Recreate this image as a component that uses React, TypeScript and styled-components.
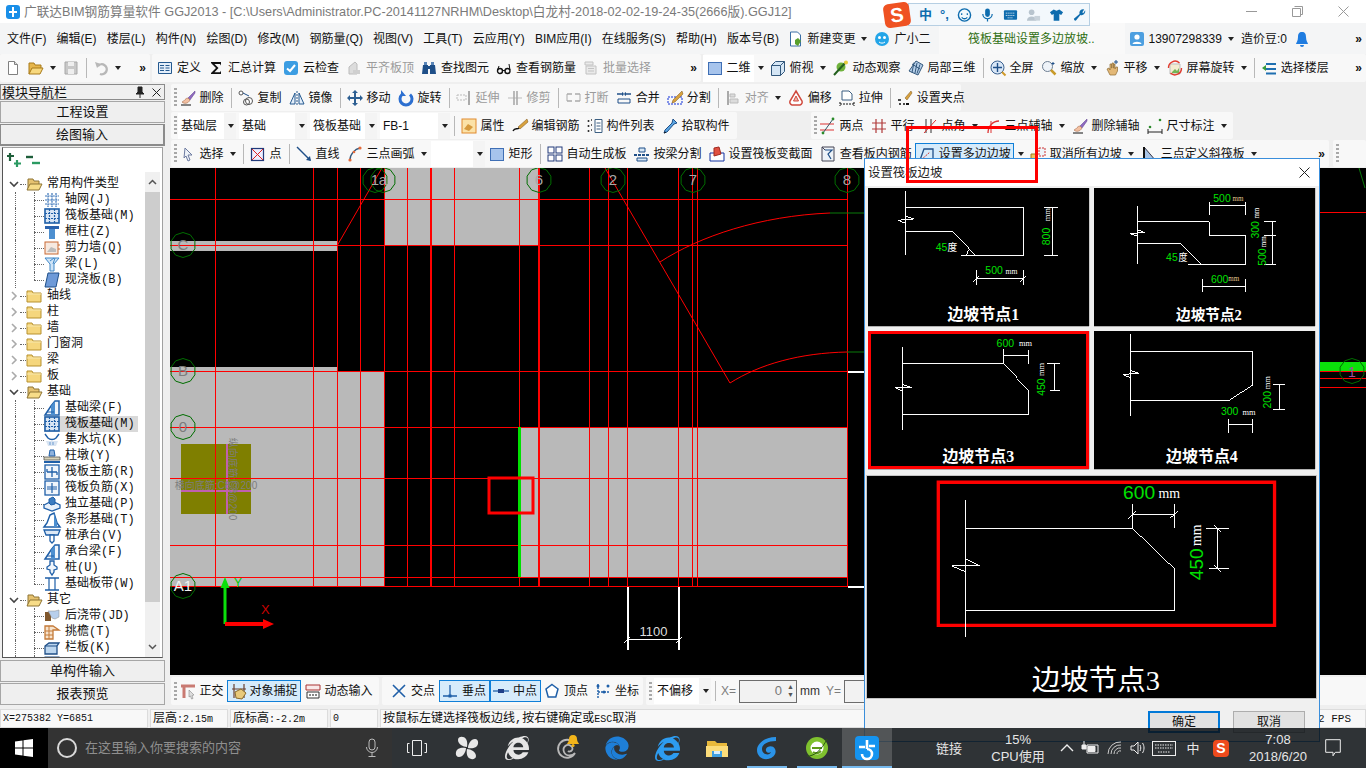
import React from 'react';
import styled, { createGlobalStyle } from 'styled-components';
import { FaEdge, FaInternetExplorer } from 'react-icons/fa';

const UI = `"Liberation Sans","Noto Sans CJK SC",sans-serif`;
const MONO = `"Liberation Mono","Noto Sans CJK SC",monospace`;
const SERIF = `"Liberation Serif","Noto Sans CJK SC",serif`;

const Global = createGlobalStyle`
  html, body { margin: 0; padding: 0; background: #000; }
  * { box-sizing: border-box; }
`;

/* ---------- page frame ---------- */
const Screen = styled.div`
  position: relative; width: 1366px; height: 768px; overflow: hidden; display: flex; flex-direction: column;
  background: #efefef; font: 12px/16px ${UI}; color: #111;
`;
const TitleBar = styled.div`
  height: 23px; background: #fff; display: flex; align-items: center; padding-left: 5px; color: #7a7a7a; font-size: 12.7px; white-space: nowrap;
`;
const TitleText = styled.span` margin-left: 3px; `;
const WinButtons = styled.div` margin-left: auto; display: flex; height: 100%; `;
const WinButton = styled.div` width: 46px; display: flex; align-items: center; justify-content: center; `;
const MenuBar = styled.div`
  height: 31px; background: #f4f5f6; display: flex; align-items: center; padding-left: 2px; white-space: nowrap;
`;
const MenuItem = styled.span` padding: 0 5.1px; `;
const MenuNotice = styled.div`
  width: 186px; height: 100%; margin-left: 5px; background: #f9f9f9; color: #2f6f12; display: flex; align-items: center; padding-left: 29px;
`;
const TopRow = styled.div` height: 28px; display: flex; gap: 2px; margin-bottom: 1px; `;
const Seg = styled.div<{ $w?: number; $ml?: number; $pl?: number }>`
  height: 100%; display: flex; align-items: center; white-space: nowrap; background: #f8f8f8; border-radius: 2px;
  padding-left: ${p => p.$pl ?? 1.5}px; margin-left: ${p => p.$ml ?? 0}px; ${p => (p.$w ? `width:${p.$w}px;flex:none;` : '')}
`;
const Workspace = styled.div` height: 624px; display: flex; `;
const LeftPane = styled.div` width: 170px; flex: none; padding: 1px 5px 2px 0; display: flex; flex-direction: column; `;
const RightPane = styled.div` flex: 1; min-width: 0; display: flex; flex-direction: column; padding-top: 1px; `;
const ToolRow = styled.div` height: 27px; flex: none; display: flex; padding-left: 1px; margin-bottom: 1px; `;
const Canvas = styled.div` height: 507px; flex: none; background: #000; `;
const CanvasSvg = styled.svg` display: block; width: 1196px; height: 507px; font-family: ${UI}; `;
const BottomRow = styled.div` height: 28px; margin-top: 2px; display: flex; gap: 3px; padding-left: 1px; `;

/* ---------- toolbar parts ---------- */
const Tool = styled.span<{ $off?: boolean; $on?: boolean; $white?: boolean; $tight?: boolean }>`
  display: inline-flex; align-items: center; gap: ${p => (p.$tight ? 3 : 4)}px; padding: 0 3.5px; height: 22px;
  color: ${p => (p.$off ? '#9b9b9b' : '#111')};
  ${p => p.$on && 'background:#d6ebfb; box-shadow: inset 0 0 0 1px #0f7fd8;'}
  ${p => p.$white && 'background:#fff; height:27px;'}
`;
const Glyph = styled.svg` width: 16px; height: 16px; flex: none; display: block; overflow: visible; `;
const Caret = styled.i`
  flex: none; width: 0; height: 0; margin-left: 2px; border: 3px solid transparent; border-top: 4px solid #222; border-bottom: 0;
`;
const OuterCaret = styled.span` flex: none; width: 11px; height: 22px; display: flex; align-items: center; justify-content: center; margin-right: 1px; `;
const Divider = styled.i` flex: none; width: 1px; height: 20px; background: #b8b8b8; margin: 0 2px 0 4px; `;
const Grip = styled.i`
  flex: none; width: 3px; height: 19px; margin: 0 -1px 0 3px;
  background: repeating-linear-gradient(#a8a8a8 0 2px, transparent 2px 4px);
`;
const Overflow = styled.span` margin-left: auto; margin-right: 5px; font: bold 12px/14px ${UI}; letter-spacing: -1px; color: #111; `;
const Combo = styled.span<{ $w: number; $ml?: number }>`
  flex: none; width: ${p => p.$w}px; height: 26px; margin-left: ${p => p.$ml ?? 0}px; background: #fff; display: flex; align-items: center; padding-left: 3px;
`;
const ComboArrow = styled.span`
  margin-left: auto; width: 12px; height: 100%; background: #f4f4f4; display: flex; align-items: center; justify-content: center;
`;
const FieldLabel = styled.span<{ $gray?: boolean }>` color: ${p => (p.$gray ? '#7d7d7d' : '#333')}; margin: 0 3px; flex: none; `;
const Field = styled.span`
  flex: none; width: 58px; height: 23px; border: 1px solid #6d6d6d; background: #f2f2f2; display: flex; align-items: center; justify-content: flex-end;
  padding-right: 14px; position: relative; color: #777; font-size: 13px;
`;
const Spin = styled.span` position: absolute; right: 2px; top: 2px; font-size: 7px; line-height: 8px; color: #555; display: flex; flex-direction: column; `;

/* ---------- left pane ---------- */
const PaneHead = styled.div`
  height: 16px; flex: none; border: 1px solid #8b8b8b; background: #efefef; display: flex; align-items: center; font-size: 13px; line-height: 13px; padding-left: 1px;
`;
const PaneHeadIcons = styled.span` margin-left: auto; display: flex; gap: 7px; padding-right: 3px; align-items: center; font-size: 11px; `;
const PaneButton = styled.div<{ $pressed?: boolean }>`
  height: 22px; flex: none; margin-top: 1px; display: flex; align-items: center; justify-content: center; background: #efefef; font-size: 13px;
  border: 1px solid ${p => (p.$pressed ? '#8b8b8b' : '#a6a6a6')};
  ${p => p.$pressed && 'border-width: 1px 2px 2px 1px;'}
`;
const TreeBox = styled.div`
  flex: 1; min-height: 0; margin: 1px 2px 1px 2px; display: flex; flex-direction: column; background: #fff; border: 1px solid #a0a0a0; border-left-color: #555; border-bottom-color: #555;
`;
const Expanders = styled.div` height: 24px; flex: none; display: flex; align-items: center; gap: 3px; padding: 0 0 0 3px; `;
const TreeBody = styled.div` flex: 1; min-height: 0; display: flex; position: relative; `;
const TreeList = styled.div` flex: 1; min-width: 0; overflow: hidden; padding-top: 4px; margin-left: -3px; `;
const Scrollbar = styled.div` width: 15px; flex: none; margin-right: 2px; background: #f0f0f0; display: flex; flex-direction: column; align-items: center; `;
const ScrollBtn = styled.span` height: 20px; flex: none; display: flex; align-items: center; justify-content: center; `;
const ScrollThumb = styled.span` width: 15px; height: 410px; flex: none; background: #cdcdcd; `;
const ScrollRest = styled.span` flex: 1; `;
const TreeRow = styled.div<{ $leaf?: boolean; $trunk?: boolean; $last?: boolean }>`
  position: relative; height: 16px; display: flex; align-items: center; white-space: nowrap; font: 12px/16px ${MONO};
  padding-left: ${p => (p.$leaf ? 34 : 8)}px;
  ${p => p.$leaf && `&::before { content:''; position:absolute; left:34px; top:0; height:${p.$last ? 8 : 16}px; border-left:1px dotted #666; }`}
  ${p => p.$trunk && `&::after { content:''; position:absolute; left:15px; top:0; height:16px; border-left:1px dotted #666; }`}
`;
const Chevron = styled.svg` width: 12px; height: 12px; flex: none; `;
const Dots = styled.i<{ $w: number }>` flex: none; width: ${p => p.$w}px; border-top: 1px dotted #666; `;
const NodeBody = styled.span<{ $sel?: boolean }>`
  display: inline-flex; align-items: center; gap: 5px; height: 16px; padding-right: 3px; ${p => p.$sel && 'background:#d9d9d9;'}
`;

/* ---------- status ---------- */
const StatusBar = styled.div` height: 21px; flex: none; display: flex; gap: 2px; padding-top: 2px; padding-left: 0; background: #efefef; font: 10px/18px ${MONO}; `;
const StatusCell = styled.div<{ $w?: number; $grow?: boolean }>`
  flex: ${p => (p.$grow ? 1 : 'none')}; width: ${p => p.$w ?? 0}px; height: 19px; background: #f8f8f8; border: 1px solid #dcdcdc; padding-left: 2px; white-space: nowrap; overflow: hidden;
`;
const Cjk = styled.span` font-size: 12px; `;
const Fps = styled.span` float: right; margin-right: 14px; font-size: 11px; `;

/* ---------- task bar ---------- */
const Taskbar = styled.div`
  position: relative; z-index: 3; height: 40px; flex: none; display: flex; align-items: stretch; background: rgba(9,14,18,.84); color: #eee;
`;
const StartCell = styled.div` width: 48px; display: flex; align-items: center; justify-content: center; background: #000; `;
const SearchBox = styled.div`
  width: 344px; background: #333; display: flex; align-items: center; padding: 0 13px 0 9px; gap: 8px; color: #8f8f8f; font-size: 13px;
`;
const SearchRing = styled.i` width: 20px; height: 20px; border-radius: 50%; border: 2.5px solid #d9d9d9; flex: none; `;
const SearchMic = styled.span` margin-left: auto; display: flex; `;
const TaskCell = styled.div<{ $run?: boolean; $active?: boolean }>`
  width: 50px; flex: none; display: flex; align-items: center; justify-content: center; position: relative;
  ${p => p.$active && 'background: rgba(255,255,255,.17);'}
  ${p => p.$run && `&::after { content:''; position:absolute; left:${p.$active ? 0 : 5}px; right:${p.$active ? 0 : 5}px; bottom:0; height:2px; background:#76b9ed; }`}
`;
const TaskGlyph = styled.svg` width: 26px; height: 26px; display: block; overflow: visible; `;
const Tray = styled.div` margin-left: auto; display: flex; align-items: stretch; padding-right: 20px; font-size: 12px; `;
const TrayCell = styled.div<{ $w: number; $ml?: number }>`
  width: ${p => p.$w}px; margin-left: ${p => p.$ml ?? 0}px; flex: none; display: flex; flex-direction: column; align-items: center; justify-content: center; text-align: center; white-space: nowrap; color: #e6e6e6; line-height: 17px; font-size: 13px;
`;
const TrayGlyph = styled.svg` width: 18px; height: 18px; display: block; `;
const SogouMark = styled.span`
  width: 16px; height: 17px; border-radius: 4px; background: #ee4a1c; color: #fff; font: bold 14px/17px ${UI}; text-align: center;
`;

/* ---------- dialog ---------- */
const Dialog = styled.div`
  position: absolute; z-index: 2; left: 864px; top: 158px; width: 456px; height: 584px; background: #f0f0f0; border: 1px solid #3a8edb; display: flex; flex-direction: column;
`;
const DialogTitle = styled.div`
  height: 27px; flex: none; background: #fff; display: flex; align-items: center; padding-left: 3px; font-size: 12.4px; color: #222;
`;
const DialogClose = styled.span` margin-left: auto; margin-right: 9px; display: flex; `;
const ThumbGrid = styled.div` display: grid; grid-template-columns: 221px 221px; grid-auto-rows: 138px; gap: 5px; padding: 2px 0 0 3px; `;
const Thumb = styled.div<{ $sel?: boolean }>`
  background: #000; box-shadow: 0 1px 0 #b0b0b0, 1px 0 0 #c8c8c8; ${p => p.$sel && 'outline: 3px solid #f00; outline-offset: -3px;'}
`;
const Drawing = styled.svg` display: block; width: 100%; height: 100%; font-family: ${UI}; `;
const Preview = styled.div` width: 451px; height: 224px; flex: none; margin: 6px 0 0 1px; background: #000; border: 1px solid #c4c4c4; `;
const DialogFoot = styled.div` flex: 1; display: flex; justify-content: flex-end; gap: 13px; padding: 12px 14px 0 0; `;
const DlgButton = styled.div<{ $primary?: boolean }>`
  width: 72px; height: 22px; display: flex; align-items: center; justify-content: center; background: #e1e1e1; font-size: 12px;
  border: ${p => (p.$primary ? '2px solid #0078d7' : '1px solid #adadad')};
`;

/* ---------- overlays ---------- */
const CalloutBox = styled.div` position: absolute; z-index: 2; left: 906px; top: 126px; width: 132px; height: 57px; border: 3px solid #f00; `;
const Ime = styled.div`
  position: absolute; z-index: 4; left: 884px; top: 3px; height: 23px; display: flex; align-items: center;
`;
const ImeLogo = styled.span`
  width: 26px; height: 24px; background: #ef5222; border-radius: 5px; transform: rotate(-8deg); color: #fff; font: bold 20px/24px ${UI}; text-align: center; z-index: 1; flex: none;
`;
const ImeBar = styled.div`
  height: 23px; width: 182px; margin-left: -2px; background: #f3f8fc; border: 1px solid #b6cfe3; display: flex; align-items: center; gap: 8px; padding-left: 10px; color: #0e6cae; font-size: 13px; font-weight: bold;
`;
const ImeGlyph = styled.svg` width: 15px; height: 16px; flex: none; `;

/* ---------- icons ---------- */
const S = (p: React.SVGProps<SVGPathElement>) => <path fill="none" {...p} />;
const B = '#1f5fa8';
const icons: Record<string, React.ReactNode> = {
  new: <><path d="M3.5 1.5h6l3 3v10h-9z" fill="#fff" stroke="#808080" /><path d="M9.5 1.5v3h3" fill="#ddd" stroke="#808080" /></>,
  open: <><path d="M1 14V3h5l1 2h6v3" fill="#e6b64c" stroke="#a87a1a" /><path d="M1 14l3-6h11l-3 6z" fill="#f7d87e" stroke="#a87a1a" /></>,
  save: <><path d="M2 2h12v12H2z" fill="#c8c8c8" stroke="#a8a8a8" /><path d="M5 2h6v4H5zM5 9h6v5H5z" fill="#eee" /></>,
  undo: <><S d="M5 6a5 5 0 1 1 2 8" stroke="#b8b8b8" strokeWidth="2.4" /><path d="M2 2l6 2-4 4z" fill="#b8b8b8" /></>,
  define: <><path d="M1.5 2.5h13v11h-13z" fill="#e3eefa" stroke="#24598f" /><S d="M3 5.5h4M3 8h4M3 10.5h4M8.5 5.5h4M8.5 8h4M8.5 10.5h4" stroke="#24598f" /></>,
  sigma: <path d="M3 2h10v3.5L12 4H6.5l4 4-4 4.2H12l1-1.5V14H3v-1l5-5-5-5z" fill="#111" />,
  cloud: <><rect x="1" y="1" width="14" height="14" rx="3" fill="#3c9de2" /><S d="M4 8.5l3 2.5 5-6" stroke="#fff" strokeWidth="2" /></>,
  level: <><path d="M3 14V7l6-5 2 2v10z" fill="#dcdcdc" stroke="#bcbcbc" /><path d="M7 14v-4h7v4z" fill="#cfcfcf" /></>,
  find: <><path d="M2 5h5v9H1zM9 5h5l1 9H9z" fill="#1f4f88" /><path d="M3 2h3v3H3zM10 2h3v3h-3z" fill="#5b86b8" /><path d="M7 6h2v3H7z" fill="#1f4f88" /></>,
  glass: <><circle cx="4" cy="11" r="2.5" fill="none" stroke="#111" strokeWidth="1.4" /><circle cx="11.5" cy="11" r="2.5" fill="none" stroke="#111" strokeWidth="1.4" /><S d="M1.5 10L3 6M14 10l-1-6M6.5 10.5h2.5" stroke="#111" /></>,
  batch: <><path d="M2 2h8v3H2zM3 6h10v8H3z" fill="#eaeaea" stroke="#c2c2c2" /><S d="M5 8.5h6M5 11h6" stroke="#c2c2c2" /></>,
  square: <rect x="1.5" y="2.5" width="13" height="12" fill="#a7c4ec" stroke="#3f6fb5" />,
  top: <><path d="M1.5 5.5l4-4h9v10l-4 4h-9z" fill="#d5e6f5" stroke="#33587c" /><path d="M1.5 5.5h9v10M10.5 5.5l4-4" fill="none" stroke="#33587c" /></>,
  orbit: <><circle cx="8" cy="7" r="4.5" fill="#6fb23c" /><path d="M1 15L13 2" stroke="#24601e" strokeWidth="2" /><circle cx="13" cy="2.5" r="2" fill="#e6cd3e" /></>,
  local3d: <><path d="M8 1l7 4-5 10-9-4z" fill="#b6cfe9" stroke="#33587c" /><S d="M4 4l8 5M6 2.5l-2 10M9 3l-2 10M12 4.5l-3 9" stroke="#33587c" /></>,
  full: <><circle cx="7.5" cy="7.5" r="6.5" fill="#d8e6f6" stroke="#39608f" /><S d="M7.5 3v9M3 7.5h9" stroke="#1f4f88" strokeWidth="1.4" /><path d="M12 12l3.5 3.5" stroke="#d09a2a" strokeWidth="2" /></>,
  zoom: <><circle cx="6.5" cy="6.5" r="5" fill="#eef3f9" stroke="#6d7e92" /><path d="M10 10l4.5 4.5" stroke="#c99b2a" strokeWidth="2.5" /><path d="M12 2v3M10.5 3.5h3" stroke="#1f4f88" /></>,
  pan: <><path d="M3 9l2-1 1 2V4h1.5v4h.5V3h1.5v5h.5V4H11v5l1-2h1.5v4l-2 4H6z" fill="#e3b877" stroke="#8c6a32" strokeWidth=".7" /><path d="M12 0v4M10 2h4" stroke="#1f4f88" /></>,
  rotate: <><path d="M3 4h10v10H3z" fill="#f4ecd0" stroke="#bdbdbd" /><path d="M5 12l3-3 2 2 2-3v5H5z" fill="#74b456" /><S d="M1.5 8a6.5 6.5 0 0 1 11-5M14.5 8a6.5 6.5 0 0 1-11 5" stroke="#e23b2e" strokeWidth="1.4" /></>,
  floor: <><path d="M5 3h10v2H5zM5 8h10v2H5zM5 12.5h10v2H5z" fill="#1f6fb0" /><path d="M1 8l4-3v6z" fill="#3a9c3a" /></>,
  brush: <><path d="M15 1L8 8l2 2 5-7z" fill="#8f6ac0" stroke="#5a3d8a" strokeWidth=".5" /><path d="M8 8c-3 0-3 3-6 4 2 2 6 2 8-2z" fill="#f3c1a3" stroke="#a86b4a" strokeWidth=".6" /><path d="M1 15h10" stroke="#111" /></>,
  copy: <><circle cx="11" cy="11" r="3.5" fill="#fff" stroke="#555" /><circle cx="8.5" cy="12" r="3" fill="none" stroke="#555" /><circle cx="3" cy="3" r="2" fill="#fff" stroke="#555" /><path d="M5 3l6 3" stroke="#1f4f88" /></>,
  mirror: <><path d="M1 14L6 3v11z" fill="#e3eefa" stroke="#24598f" /><path d="M15 14L10 3v11z" fill="#e3eefa" stroke="#24598f" /><path d="M8 1v14" stroke="#24598f" strokeDasharray="2 1" /></>,
  move: <path d="M8 0l3 3H9v4h4V5l3 3-3 3V9H9v4h2l-3 3-3-3h2V9H3v2L0 8l3-3v2h4V3H5z" fill="#2d5f92" />,
  rot: <><S d="M4 4.5a6 6 0 1 0 8 0" stroke="#2c6fd0" strokeWidth="3" /><path d="M3 0v6h5z" fill="#2c6fd0" /></>,
  extend: <><path d="M1 5h9v5H1z" fill="none" stroke="#bbb" strokeDasharray="2 1" /><path d="M13 1v14" stroke="#aaa" strokeWidth="2" /></>,
  trim: <><path d="M1 8h14" stroke="#bbb" strokeWidth="1" /><path d="M7 1v14M10 1v14" stroke="#aaa" strokeWidth="1.6" /></>,
  breakL: <><S d="M2 4h5M10 4h5M2 11h5M10 11h5" stroke="#aaa" strokeWidth="1.5" /><path d="M2 4v7M15 4v7" stroke="#aaa" /></>,
  merge: <><path d="M1 4h5M10 4h5" stroke="#1f4f88" strokeWidth="1.4" /><path d="M6 2l3 2-3 2zM10 2L7 4l3 2z" fill="#1f4f88" /><path d="M2 9h12v4H2z" fill="none" stroke="#1f4f88" /></>,
  split: <><path d="M1 14h14V7H1z" fill="none" stroke="#1030d8" strokeDasharray="2 1" /><path d="M15 1L6 10l-1 3 3-1 8-8z" fill="#d8a23e" stroke="#7a521a" strokeWidth=".5" /></>,
  align: <><path d="M3 1v14" stroke="#aaa" strokeWidth="2" /><path d="M5 4h5v3H5zM5 9h8v4H5z" fill="#dcdcdc" stroke="#bbb" /></>,
  offset: <><path d="M8 1l6 10a3 3 0 0 1-2 4H4a3 3 0 0 1-2-4z" fill="#fff" stroke="#d04a3e" strokeWidth="1.5" /><path d="M8 6l2.5 5h-5z" fill="#f3b3aa" stroke="#d04a3e" /></>,
  stretch: <><path d="M3 1h7l3 3v6H3z" fill="#fff" stroke="#3c5f82" /><path d="M1 14h14M1 12v4M15 12v4" stroke="#111" strokeDasharray="2 1" /></>,
  grip: <><path d="M14 1L8 8l2 2 5-7z" fill="#d8a23e" stroke="#7a521a" strokeWidth=".5" /><path d="M2 14h2M6 14h2M1 10h3" stroke="#111" strokeWidth="1.6" /><path d="M9 13h3v2H9z" fill="#111" /></>,
  props: <><rect x="1" y="1" width="14" height="14" fill="#fbe2a8" stroke="#e08a2e" /><path d="M3 11l4-5 5 3-4 4z" fill="#d69a3e" /></>,
  edit: <><path d="M15 1L6 9l2 2 8-7z" fill="#d8a23e" stroke="#7a521a" strokeWidth=".5" /><path d="M1 13c2-4 4-1 6-3" fill="none" stroke="#111" strokeWidth="1.4" /></>,
  list: <><path d="M1.5 2v2M1.5 7v2M1.5 12v2M4 2h1M4 7h1M4 12h1" stroke="#333" strokeWidth="1.6" /><path d="M8 1.5h7v13H8z" fill="#fff" stroke="#3c5f82" /><path d="M9.5 5h4M9.5 8h4M9.5 11h4" stroke="#3c5f82" /></>,
  pick: <><path d="M11 1l4 4-3 1-7 8-3 1 1-3 7-7z" fill="#5ba6e2" stroke="#1f4f88" /><path d="M2 15l2-1" stroke="#111" /></>,
  twoPt: <><path d="M0 6h14M0 12h14" stroke="#d33" /><path d="M3 15L13 1" stroke="#356" /><circle cx="3" cy="15" r="1.4" fill="#2a8a2a" /><circle cx="13" cy="1" r="1.4" fill="#2a8a2a" /></>,
  parallel: <path d="M1 5h14M1 11h14M5 1v14M11 1v14" stroke="#b03a3a" strokeWidth="1.2" />,
  angle: <><path d="M1 10h14" stroke="#d33" /><path d="M4 1v14M9 1v14" stroke="#333" /><path d="M2 15L14 2" stroke="#d33" /></>,
  arcAxis: <><path d="M1 9h15M6 3v12" stroke="#d33" /><S d="M3 15c0-7 5-12 11-12" stroke="#d33" strokeWidth="1.4" /></>,
  dim: <><path d="M1 14h14M1 11v5M15 11v5" stroke="#222" /><circle cx="3" cy="9" r="1.3" fill="#2a8a2a" /><circle cx="13" cy="2" r="1.3" fill="#2a8a2a" /></>,
  arrow: <path d="M5 2l7 7H8l2 5-2 1-2-5-2 2z" fill="#eef2f8" stroke="#6c7aa0" />,
  point: <><rect x="1.5" y="2.5" width="12" height="12" fill="#eef" stroke="#223a7a" strokeWidth="1.2" /><path d="M2 3l11 11M13 3L2 14" stroke="#d22" /></>,
  line: <><path d="M1 1l13 13" stroke="#1f4f88" strokeWidth="1.4" /><path d="M15 15l-5-1 4-4z" fill="#1f4f88" /></>,
  arc: <><S d="M3 14C3 8 8 3 13 2" stroke="#33587c" strokeWidth="1.4" /><circle cx="3" cy="14" r="1.6" fill="#e36a3a" /><circle cx="7" cy="6" r="1.3" fill="#e36a3a" /><circle cx="13" cy="2" r="1.6" fill="#e36a3a" /></>,
  auto: <><rect x="1" y="1" width="6" height="6" fill="#fff" stroke="#223a7a" /><rect x="9" y="1" width="6" height="6" fill="#fff" stroke="#223a7a" /><rect x="1" y="9" width="6" height="6" fill="#fff" stroke="#223a7a" /><rect x="9" y="9" width="6" height="6" fill="#fff" stroke="#223a7a" /></>,
  beamSplit: <><path d="M5 2h6v4H5z" fill="#d5e6f5" stroke="#1f4f88" /><path d="M0 9h16" stroke="#1f4f88" strokeWidth="2" strokeDasharray="3 1" /><path d="M3 12h10v3H3z" fill="#d5e6f5" stroke="#1f4f88" /></>,
  varSec: <><path d="M1 7h14v8H1z" fill="#fff" stroke="#1030a0" /><path d="M5 2l5-1 2 7-7 2z" fill="#e05040" stroke="#a02a20" /></>,
  view: <><path d="M2 1h12v14H2z" fill="#eef3f8" stroke="#445" /><path d="M5 4h7l-4 4 3 5" fill="none" stroke="#1f4f88" strokeWidth="1.2" /><path d="M2 1l3 3" stroke="#445" /></>,
  slope: <><path d="M1 14L5 3h9v11z" fill="none" stroke="#1f4f88" strokeWidth="1.3" /><path d="M2 14l9-8" stroke="#c33" strokeDasharray="2 1" /></>,
  cancel: <><path d="M1 8h6v6H1z" fill="#f0c75c" stroke="#9a7a20" /><path d="M9 2h6v8H9z" fill="#eef3f8" stroke="#c33" strokeDasharray="2 1" /></>,
  tri: <><path d="M3 1v14h12z" fill="#a8c4e6" stroke="#334" /><path d="M3 1v14" stroke="#111" strokeWidth="2" /></>,
  ortho: <><path d="M1 3h14M4 3v12" stroke="#c97a72" strokeWidth="3" /><path d="M9 7l5 5-2 .5 1 3-1.5.5-1-3L9 14z" fill="#ddd" stroke="#777" strokeWidth=".5" /></>,
  snap: <><path d="M3 1v14M13 1v14M1 6h14" stroke="#6a4030" strokeWidth="1.2" /><path d="M4 9l6-3 5 4-4 6-6-1z" fill="#e8c97a" stroke="#8a6a2a" /></>,
  dyn: <><path d="M1 2h14v5H1z" fill="#f8e8e8" stroke="#a33" /><path d="M2 9h12v6H2z" fill="#fff" stroke="#333" /><path d="M5 11v2M8 11v2M11 11v2" stroke="#111" /></>,
  cross: <path d="M2 2l12 12M14 2L2 14" stroke="#1f5fa8" strokeWidth="1.6" />,
  perp: <><path d="M1 13h14M8 2v11" stroke="#1f5fa8" strokeWidth="1.3" /><rect x="6.5" y="11.5" width="3" height="3" fill="#1f5fa8" /></>,
  mid: <><path d="M0 8h16" stroke="#1f5fa8" strokeWidth="1.3" /><rect x="5" y="6" width="6" height="4" fill="#1f3f88" /></>,
  vertex: <path d="M8 1.5l6 4.5-2.2 8H4.2L2 6z" fill="#fff" stroke="#1f5fa8" strokeWidth="1.5" />,
  coord: <><path d="M3 1v14M3 9h12" stroke="#1f5fa8" strokeWidth="1.4" strokeDasharray="2 1" /><circle cx="3" cy="3" r="1.5" fill="#1f5fa8" /><circle cx="13" cy="3" r="1.5" fill="#1f5fa8" /><circle cx="9" cy="9" r="1.5" fill="#1f5fa8" /></>,
  changeDoc: <><path d="M3.5 1h7l3 3v11h-10z" fill="#fff" stroke="#3a6ea5" /><path d="M8 9l3-2 3 3-3 5-3-2z" fill="#5aa02c" /></>,
  mascot: <><circle cx="8" cy="8" r="7" fill="#23a5e8" /><circle cx="5.5" cy="6.5" r="1.5" fill="#fff" /><circle cx="10.5" cy="6.5" r="1.5" fill="#fff" /><path d="M5 11c2 1.5 4 1.5 6 0" stroke="#fff" fill="none" /></>,
  user: <><rect x="1" y="1" width="14" height="14" rx="2" fill="#4d9fe0" /><circle cx="8" cy="6" r="2.6" fill="#fff" /><path d="M3.5 13c.5-3 8.500-3 9 0z" fill="#fff" /></>,
  bell: <><path d="M8 1c3 0 4 2 4 5 0 4 2 6 2 7H2c0-1 2-3 2-7 0-3 1-5 4-5z" fill="#1f7ce0" /><path d="M6 14h4a2 2 0 0 1-4 0z" fill="#1f7ce0" /></>,
  appFrame: <><rect x="1" y="1" width="14" height="14" rx="3" fill="#1a8fe8" /><path d="M8 3v10M4 8h8" stroke="#fff" strokeWidth="2" /></>,
  plusplus: <><path d="M4 1v8M1 4h7" stroke="#1e5e3a" strokeWidth="2.2" /><path d="M11 8v7M8 11.500h7" stroke="#2b9a62" strokeWidth="2.2" /></>,
  minusminus: <><path d="M1 5h7" stroke="#1e5e3a" strokeWidth="2.4" /><path d="M7 11h8" stroke="#2b9a62" strokeWidth="2.4" /></>,
  folderClosed: <><path d="M1 14V3h5l1 2h8v9z" fill="#f5d67d" stroke="#b7912f" /><path d="M1 6h14" stroke="#f8e8b0" /></>,
  folderOpen: <><path d="M2 14V3h5l1 2h5v3" fill="#e6c270" stroke="#8e7435" /><path d="M1 14l3-6h12l-3 6z" fill="#f7dc88" stroke="#8e7435" /></>,
  tGrid: <path d="M4 1v14M8 1v14M12 1v14M1 4h14M1 8h14M1 12h14" stroke="#3b74b8" strokeWidth="1.2" strokeDasharray="2 .6" />,
  tRaft: <><rect x="1" y="1" width="14" height="14" fill="#d9e6f5" stroke={B} strokeWidth="1.6" /><path d="M1 5.500h14M1 10.500h14M5.500 1v14M10.500 1v14" stroke={B} strokeWidth="1.2" strokeDasharray="2 1" /></>,
  tColumn: <><path d="M1 2h14v3H1z" fill="#2a62ad" /><path d="M5 5h6v10H5z" fill="#4d8fd0" /></>,
  tWall: <><rect x="1" y="2" width="13" height="12" fill="#f6e9e0" stroke="#c96a35" /><path d="M3 12h9v-3L7 7z" fill="#bcbcbc" /><path d="M14 5h2M14 9h2" stroke="#c96a35" /></>,
  tBeam: <><path d="M1 2h14L10 8v7H6V8z" fill="#cfe4f7" stroke="#3f87c7" /><path d="M11 2l-2 6M6 5l4-3" stroke="#3f87c7" /></>,
  tSlab: <path d="M4 1h11l-3 14H1z" fill="#6e9ad8" stroke="#1f4f88" />,
  tBeamF: <><path d="M1 15L7 6l4-5h4v14z" fill="#f0f5fb" stroke={B} strokeWidth="1.5" /><path d="M7 6l4-5v14H7z" fill="#4d8fd0" /><path d="M3 12h7" stroke={B} /></>,
  tPit: <><path d="M1 2l3 4c2 2 6 2 8 0l3-4" fill="none" stroke={B} strokeWidth="1.4" /><path d="M2 9h12l-2 5H4z" fill="#d8e4f2" /><path d="M6 10v3M9 10v3" stroke="#6a9ad0" /></>,
  tCap: <><path d="M6 2h4l1 6H5z" fill="#8fb2dc" stroke={B} /><path d="M0 9h16v3H0z" fill="#d8d2b8" stroke="#555" strokeWidth=".8" /><path d="M0 14h16" stroke={B} strokeWidth="2" /></>,
  tMain: <><rect x="1" y="1" width="14" height="14" fill="#f0f5fb" stroke={B} strokeWidth="1.3" /><path d="M8 3v10M3 8h10M3 5v3M13 8v3" stroke={B} strokeWidth="1.3" /></>,
  tNeg: <><rect x="1" y="1" width="14" height="14" fill="#f0f5fb" stroke={B} strokeWidth="1.3" /><path d="M8 3v10M3 7h10M3 9h10" stroke={B} strokeWidth="1.2" /></>,
  tIso: <><path d="M0 9l8-4 8 4v3l-8 3-8-3z" fill="#e8f0fa" stroke={B} strokeWidth="1.3" /><path d="M5 3l4-2 2 2v5l-4 1-2-2z" fill="#3c7cc0" stroke={B} /></>,
  tStrip: <><path d="M0 15l3-4 3-8 4-2 3 10 3 4z" fill="#fff" stroke={B} strokeWidth="1.5" /><path d="M10 1l3 10v4h-3z" fill="#4d8fd0" /></>,
  tPileCap: <><path d="M0 2h16l-2 5H2z" fill="#dce8f5" stroke={B} strokeWidth="1.3" /><path d="M6 7h4v6l-2 2-2-2z" fill="#fff" stroke={B} strokeWidth="1.3" /></>,
  tPile: <><path d="M6 1h4v4l3 2v2l-3 1v2l-2 3-2-3v-2L3 9V7l3-2z" fill="#f0f5fb" stroke={B} strokeWidth="1.3" /></>,
  tBand: <><path d="M1 2h14M1 14h14" stroke={B} strokeWidth="1.7" /><path d="M5 2v12M11 2v12" stroke={B} strokeWidth="1.2" /></>,
  tPost: <><path d="M1 4h6v9H1z" fill="#80572c" /><path d="M4 3h7l4-1v7l-4 2-3-1z" fill="#b8cfec" stroke="#888" strokeWidth=".5" /></>,
  tEave: <><path d="M1 2h8l6 4H9v9H1z" fill="#f6e3cd" stroke="#c47a38" strokeWidth="1.3" /><path d="M1 7h8M1 11h8M5 2v13" stroke="#c47a38" /></>,
  tParapet: <><path d="M1 6l4-3h10l-2 3v8H1z" fill="#bcd6ef" stroke="#1f4f88" strokeWidth="1.3" /><path d="M1 6h12" stroke="#1f4f88" /></>,
  tCoping: <><rect x="1" y="1" width="14" height="14" fill="#bcd6ef" stroke="#1f4f88" /></>,
};
const Icon = ({ n }: { n: string }) => <Glyph viewBox="0 0 16 16">{icons[n]}</Glyph>;

/* ---------- data ---------- */
type T = { i?: string; t?: string; off?: boolean; drop?: boolean; on?: boolean; white?: boolean; tight?: boolean; bare?: boolean } | '|';
const renderTools = (list: T[]) =>
  list.map((d, k) => {
    if (d === '|') return <Divider key={k} />;
    if (d.bare) return <OuterCaret key={k}><Caret /></OuterCaret>;
    return (
      <Tool key={k} $off={d.off} $on={d.on} $white={d.white} $tight={d.tight}>
        {d.i && <Icon n={d.i} />}
        {d.t && <span>{d.t}</span>}
        {d.drop && <Caret />}
      </Tool>
    );
  });

const menus = ['文件(F)', '编辑(E)', '楼层(L)', '构件(N)', '绘图(D)', '修改(M)', '钢筋量(Q)', '视图(V)', '工具(T)', '云应用(Y)', 'BIM应用(I)', '在线服务(S)', '帮助(H)', '版本号(B)'];

const row1a: T[] = [{ i: 'new' }, { i: 'open', drop: true }, { i: 'save', off: true }, '|', { i: 'undo', off: true, drop: true }];
const row1b: T[] = [
  { i: 'define', t: '定义' }, { i: 'sigma', t: '汇总计算' }, { i: 'cloud', t: '云检查' }, { i: 'level', t: '平齐板顶', off: true },
  { i: 'find', t: '查找图元' }, { i: 'glass', t: '查看钢筋量' }, { i: 'batch', t: '批量选择', off: true },
];
const row1c: T[] = [
  { i: 'top', t: '俯视', drop: true }, { i: 'orbit', t: '动态观察' }, { i: 'local3d', t: '局部三维' }, '|', { i: 'full', t: '全屏' },
  { i: 'zoom', t: '缩放', drop: true }, { i: 'pan', t: '平移', drop: true }, { i: 'rotate', t: '屏幕旋转', drop: true }, '|', { i: 'floor', t: '选择楼层' },
];
const row2: T[] = [
  { i: 'brush', t: '删除' }, '|', { i: 'copy', t: '复制' }, { i: 'mirror', t: '镜像' }, '|', { i: 'move', t: '移动' }, { i: 'rot', t: '旋转' }, '|',
  { i: 'extend', t: '延伸', off: true }, { i: 'trim', t: '修剪', off: true }, '|', { i: 'breakL', t: '打断', off: true }, { i: 'merge', t: '合并' }, { i: 'split', t: '分割' }, '|',
  { i: 'align', t: '对齐', off: true, drop: true }, { i: 'offset', t: '偏移' }, { i: 'stretch', t: '拉伸' }, '|', { i: 'grip', t: '设置夹点' },
];
const row3a: T[] = [{ i: 'props', t: '属性' }, { i: 'edit', t: '编辑钢筋' }, { i: 'list', t: '构件列表' }, { i: 'pick', t: '拾取构件' }];
const row3b: T[] = [
  { i: 'twoPt', t: '两点' }, { i: 'parallel', t: '平行' }, { i: 'angle', t: '点角', drop: true }, { i: 'arcAxis', t: '三点辅轴', drop: true },
  { i: 'brush', t: '删除辅轴' }, { i: 'dim', t: '尺寸标注', drop: true },
];
const row4a: T[] = [{ i: 'arrow', t: '选择', drop: true }, '|', { i: 'point', t: '点' }, '|', { i: 'line', t: '直线' }, { i: 'arc', t: '三点画弧', drop: true }];
const row4b: T[] = [
  { i: 'square', t: '矩形' }, '|', { i: 'auto', t: '自动生成板' }, { i: 'beamSplit', t: '按梁分割' }, { i: 'varSec', t: '设置筏板变截面' }, { i: 'view', t: '查看板内钢筋' },
  { i: 'slope', t: '设置多边边坡', on: true }, { bare: true }, { i: 'cancel', t: '取消所有边坡', drop: true }, { i: 'tri', t: '三点定义斜筏板', drop: true },
];
const bot1: T[] = [{ i: 'ortho', t: '正交' }, { i: 'snap', t: '对象捕捉', on: true, tight: true }, { i: 'dyn', t: '动态输入' }];
const bot2: T[] = [
  { i: 'cross', t: '交点' }, { i: 'perp', t: '垂点', on: true }, { i: 'mid', t: '中点', on: true }, { i: 'vertex', t: '顶点' }, { i: 'coord', t: '坐标' },
];

type Node = { t: string; i?: string; open?: boolean; kids?: [string, string][] };
const tree: Node[] = [
  { t: '常用构件类型', open: true, kids: [['tGrid', '轴网(J)'], ['tRaft', '筏板基础(M)'], ['tColumn', '框柱(Z)'], ['tWall', '剪力墙(Q)'], ['tBeam', '梁(L)'], ['tSlab', '现浇板(B)']] },
  { t: '轴线' }, { t: '柱' }, { t: '墙' }, { t: '门窗洞' }, { t: '梁' }, { t: '板' },
  { t: '基础', open: true, kids: [['tBeamF', '基础梁(F)'], ['tRaft', '筏板基础(M)'], ['tPit', '集水坑(K)'], ['tCap', '柱墩(Y)'], ['tMain', '筏板主筋(R)'], ['tNeg', '筏板负筋(X)'], ['tIso', '独立基础(P)'], ['tStrip', '条形基础(T)'], ['tPileCap', '桩承台(V)'], ['tBeamF', '承台梁(F)'], ['tPile', '桩(U)'], ['tBand', '基础板带(W)']] },
  { t: '其它', open: true, kids: [['tPost', '后浇带(JD)'], ['tEave', '挑檐(T)'], ['tParapet', '栏板(K)'], ['tCoping', '压顶(Y)']] },
];

/* ---------- CAD canvas ---------- */
const vLines: [number, number?][] = [[215], [313], [337], [360], [384], [407], [430, 2], [454], [519], [538, 2], [589], [608], [627], [678], [692], [697], [847]];
const hLines: number[] = [199, 245, 371, 427, 478, 545, 577, 586];
const sideLines: number[] = [212, 371, 378, 387];
const axisSide: [number, string, string][] = [[245, 'C', '#7c7c7c'], [371, 'B', '#7c7c7c'], [427, '0', '#7c7c7c'], [586, 'A1', '#f2f2f2']];
const axisTop: [number, string][] = [[375, '1'], [383, 'a'], [539, '6'], [613, '2'], [693, '7'], [847, '8']];

const Octagon = ({ x, y }: { x: number; y: number }) => (
  <polygon fill="none" stroke="#006e00" points={[0, 1, 2, 3, 4, 5, 6, 7, 8, 9].map(k => `${x + 12.5 * Math.sin(k * Math.PI / 5)},${y - 12.5 * Math.cos(k * Math.PI / 5)}`).join(' ')} />
);

const CadCanvas = () => (
  <Canvas>
    <CanvasSvg viewBox="170 168 1196 507">
      <g fill="#b9b9b9">
        <rect x="384" y="168" width="154.500" height="77.500" />
        <rect x="170" y="241" width="167.500" height="10" />
        <rect x="170" y="367" width="167.500" height="5" />
        <rect x="170" y="371" width="214.500" height="215" />
        <rect x="519" y="427" width="328" height="150.500" />
      </g>
      <rect x="181" y="444" width="70" height="70" fill="#7f7f00" />
      <rect x="226" y="444" width="2" height="70" fill="#c060b0" />
      <rect x="181" y="490" width="70" height="2" fill="#c060b0" />
      <g fill="#f00">
        {vLines.map(([x, w], k) => <rect key={k} x={x} y={168} width={w ?? 1} height={419} />)}
        {hLines.map(y => <rect key={y} x={170} y={y} width={678} height={1} />)}
        {sideLines.map(y => <rect key={y} x={1320} y={y} width={46} height={1} />)}
      </g>
      <text x="216" y="489" fontSize="10" fill="#7d7d7d" textAnchor="middle">横向底筋:C8@200</text>
      <text transform="translate(229 479) rotate(90)" fontSize="10" fill="#7d7d7d" textAnchor="middle">纵向底筋:C8@200</text>
      <g fill="none" stroke="#f00">
        <path d="M337.500 245L382 168M605 168L730 383" />
        <path d="M660 262C700 236 760 216 830 213M730 383C760 364 800 353 847 352" />
      </g>
      <path d="M830 213H864M847 352H864M1359 168L1365 188" fill="none" stroke="#0a7a0a" />
      <rect x="1320" y="362" width="46" height="9" fill="#0be00b" />
      <rect x="518" y="427" width="3" height="150" fill="#00e000" />
      <rect x="489" y="478" width="44" height="35" fill="none" stroke="#f00" strokeWidth="3" />
      {axisSide.map(([y, t, c]) => (
        <g key={t}><Octagon x={183} y={y} /><text x={183} y={y + 5} fontSize="15" fill={c} textAnchor="middle">{t}</text></g>
      ))}
      {axisTop.map(([x, t]) => (
        <g key={t}><Octagon x={x} y={180} /><text x={x} y={185} fontSize="15" fill="#a8a8a8" textAnchor="middle">{t}</text></g>
      ))}
      <Octagon x={1352} y={371} />
      <text x="1352" y="377" fontSize="14" fill="#a050a0" textAnchor="middle">1</text>
      <path d="M223.500 624V588h-3l4.500-11 4.500 11h-3v36z" fill="#0be00b" />
      <path d="M225 622h38v-3l11 5-11 5v-3h-38z" fill="#f00" />
      <text x="234" y="587" fontSize="12" fill="#00c800">Y</text>
      <text x="261" y="614" fontSize="13" fill="#c80000">X</text>
      <g fill="#fff">
        <rect x="627" y="587" width="2" height="63" />
        <rect x="678" y="587" width="2" height="63" />
        <rect x="627" y="639" width="53" height="1" />
        <rect x="848" y="371" width="16" height="2" />
        <rect x="848" y="586" width="16" height="2" />
      </g>
      <path d="M624 643l6-6M676 643l6-6" stroke="#fff" />
      <text x="653.500" y="636" fontSize="13" fill="#ddd" textAnchor="middle">1100</text>
    </CanvasSvg>
  </Canvas>
);

/* ---------- slope drawings (coordinates are those of the 3x crop of the reference) ---------- */
type Lbl = [string, number, number, number, string, number?];
const Slope = ({ box, d, labels, cap, thin, frame, big }: { box: string; d: string; labels: Lbl[]; cap: [string, number, number, number]; thin?: boolean; frame?: string; big?: boolean }) => (
  <Drawing viewBox={box} preserveAspectRatio="none">
    {frame && <path d={frame} fill="none" stroke="#f00" strokeWidth="10" />}
    <path d={d} fill="none" stroke="#fff" strokeWidth="3" shapeRendering="crispEdges" />
    {labels.map(([t, x, y, s, c, r], k) => (
      <text key={k} transform={`translate(${x} ${y})${r ? ` rotate(${r})` : ''}${big ? '' : ' scale(1.05 1.15)'}`} fontSize={s} fill={c} fontFamily={t === 'mm' ? SERIF : undefined}>{t}</text>
    ))}
    <text x={cap[1]} y={cap[2]} fontSize={cap[3]} fill="#fff" fontWeight={thin ? 'normal' : 'bold'} fontFamily={SERIF}>{cap[0]}</text>
  </Drawing>
);
const G = '#00e000';
const W = '#fff';

/* ---------- task-bar art ---------- */
const Pinwheel = () => (
  <TaskGlyph viewBox="0 0 26 26"><path d="M13 12C9 12 4 9 4 5s6-4 8-1 1 8 1 8zM14 13c0-4 3-9 7-9s4 6 1 8-8 1-8 1zM13 14c4 0 9 3 9 7s-6 4-8 1-1-8-1-8zM12 13c0 4-3 9-7 9s-4-6-1-8 8-1 8-1z" fill="#e8e8e8" /></TaskGlyph>
);
const Swirl = () => (
  <TaskGlyph viewBox="0 0 26 26">
    <path d="M20 8a9 9 0 1 0 1 10c-2 3-9 4-11-1s3-9 7-6-1 7-3 5" fill="none" stroke="#b8b8b8" strokeWidth="1.8" />
    <path d="M19 0c3 0 4 2 4 4 0 3 2 4 2 5H13c0-1 2-2 2-5 0-2 1-4 4-4z" fill="#f3b51a" />
    <circle cx="19" cy="10.500" r="1.600" fill="#f3b51a" />
  </TaskGlyph>
);
const FolderArt = () => (
  <TaskGlyph viewBox="0 0 26 26"><path d="M3 6h8l2 2h10v5H3z" fill="#e8b93c" /><path d="M2 11h22v11H2z" fill="#fbdc7a" /><path d="M8 16h10v6H8z" fill="#3f9fe0" /><path d="M10 16h6v3h-6z" fill="#d9eefb" /></TaskGlyph>
);
const GArt = () => (
  <TaskGlyph viewBox="0 0 26 26"><path d="M22 2C10 2 3 9 3 15c0 6 5 10 11 9s9-6 7-10-8-3-9 0 3 5 5 3c-1 4-9 3-9-3 0-5 6-8 14-8z" fill="#2a93e8" /></TaskGlyph>
);
const GreenE = () => (
  <TaskGlyph viewBox="0 0 26 26">
    <circle cx="13" cy="13" r="11" fill="#7fc12e" />
    <circle cx="13" cy="13" r="6.500" fill="#fff" />
    <path d="M8 13h10M9 17c3 2 6 1 8-1" stroke="#5f9d1a" strokeWidth="2" fill="none" />
    <path d="M3 21c6 1 15-6 20-17" stroke="#2a5a10" strokeWidth="1" fill="none" />
  </TaskGlyph>
);
const AppArt = () => (
  <TaskGlyph viewBox="0 0 26 26"><rect x="1" y="1" width="24" height="24" rx="4" fill="#1594f0" /><path d="M13 5v9M13 14a5 5 0 1 1-5 5M5 12h6a3 3 0 0 1 0 0M15 11h6" stroke="#fff" strokeWidth="2.600" fill="none" /></TaskGlyph>
);

/* ---------- page ---------- */
export default function App() {
  return (
    <Screen>
      <Global />
      <TitleBar>
        <Glyph viewBox="0 0 16 16">{icons.appFrame}</Glyph>
        <TitleText>广联达BIM钢筋算量软件 GGJ2013 - [C:\Users\Administrator.PC-20141127NRHM\Desktop\白龙村-2018-02-02-19-24-35(2666版).GGJ12]</TitleText>
        <WinButtons>
          <WinButton><svg width="11" height="11"><path d="M0 5.500h11" stroke="#999" /></svg></WinButton>
          <WinButton><svg width="11" height="11"><path d="M2.500.5h8v8h-2M.5 2.500h8v8h-8z" fill="none" stroke="#999" /></svg></WinButton>
          <WinButton><svg width="11" height="11"><path d="M.5.5l10 10M10.500.5l-10 10" stroke="#999" /></svg></WinButton>
        </WinButtons>
      </TitleBar>

      <MenuBar>
        {menus.map(m => <MenuItem key={m}>{m}</MenuItem>)}
        <Tool><Icon n="changeDoc" /><span>新建变更</span><Caret /></Tool>
        <Tool><Icon n="mascot" /><span>广小二</span></Tool>
        <MenuNotice>筏板基础设置多边放坡..</MenuNotice>
        <Tool><Icon n="user" /><span>13907298339</span><Caret /></Tool>
        <Tool>造价豆:0</Tool>
        <Tool><Icon n="bell" /></Tool>
        <Overflow>»</Overflow>
      </MenuBar>

      <TopRow>
        <Seg $w={150} $pl={1}>{renderTools(row1a)}<Overflow>»</Overflow></Seg>
        <Seg $w={549}>{renderTools(row1b)}<Overflow>»</Overflow></Seg>
        <Seg $w={663} $ml={0} $pl={0}>
          <Tool $white><Icon n="square" /><span>二维</span></Tool>
          <OuterCaret><Caret /></OuterCaret>
          {renderTools(row1c)}
          <Overflow>»</Overflow>
        </Seg>
      </TopRow>

      <Workspace>
        <LeftPane>
          <PaneHead>模块导航栏
            <PaneHeadIcons>
              <svg width="10" height="12"><path d="M3 1h4v5l2 2H1l2-2zM5 8v4" fill="#222" stroke="#222" /></svg>
              <svg width="9" height="9"><path d="M.5.5l8 8M8.500.5l-8 8" stroke="#222" /></svg>
            </PaneHeadIcons>
          </PaneHead>
          <PaneButton>工程设置</PaneButton>
          <PaneButton $pressed>绘图输入</PaneButton>
          <TreeBox>
            <Expanders><Icon n="plusplus" /><Icon n="minusminus" /></Expanders>
            <TreeBody>
              <TreeList>
                {tree.map(g => (
                  <React.Fragment key={g.t}>
                    <TreeRow>
                      <Chevron viewBox="0 0 12 12"><path d={g.open ? 'M2 4l4 4 4-4' : 'M4 2l4 4-4 4'} fill="none" stroke={g.open ? '#444' : '#aaa'} strokeWidth="1.6" /></Chevron>
                      <Dots $w={6} />
                      <NodeBody><Icon n={g.open ? 'folderOpen' : 'folderClosed'} /><span>{g.t}</span></NodeBody>
                    </TreeRow>
                    {g.kids?.map(([i, t], k) => (
                      <TreeRow $leaf $trunk $last={k === g.kids!.length - 1} key={t + k}>
                        <Dots $w={10} />
                        <NodeBody $sel={g.t === '基础' && k === 1}><Icon n={i} /><span>{t}</span></NodeBody>
                      </TreeRow>
                    ))}
                  </React.Fragment>
                ))}
              </TreeList>
              <Scrollbar>
                <ScrollBtn><svg width="9" height="6"><path d="M1 5l3.500-3.500L8 5" fill="none" stroke="#555" strokeWidth="1.500" /></svg></ScrollBtn>
                <ScrollThumb />
                <ScrollRest />
                <ScrollBtn><svg width="9" height="6"><path d="M1 1l3.500 3.500L8 1" fill="none" stroke="#555" strokeWidth="1.500" /></svg></ScrollBtn>
              </Scrollbar>
            </TreeBody>
          </TreeBox>
          <PaneButton>单构件输入</PaneButton>
          <PaneButton>报表预览</PaneButton>
        </LeftPane>

        <RightPane>
          <ToolRow>
            <Seg $w={790} $pl={0}><Grip />{renderTools(row2)}</Seg>
          </ToolRow>
          <ToolRow>
            <Seg $w={566} $pl={0}>
              <Grip />
              <Combo $w={58} $ml={2}>基础层<ComboArrow><Caret /></ComboArrow></Combo>
              <Combo $w={68} $ml={3}>基础<ComboArrow><Caret /></ComboArrow></Combo>
              <Combo $w={67} $ml={3}>筏板基础<ComboArrow><Caret /></ComboArrow></Combo>
              <Combo $w={70} $ml={3}>FB-1<ComboArrow><Caret /></ComboArrow></Combo>
              <Divider />
              {renderTools(row3a)}
            </Seg>
            <Seg $w={422} $ml={74} $pl={0}><Grip />{renderTools(row3b)}</Seg>
          </ToolRow>
          <ToolRow>
            <Seg $w={1158} $pl={0}>
              <Grip />
              {renderTools(row4a)}
              <Combo $w={54} $ml={1}><ComboArrow><Caret /></ComboArrow></Combo>
              {renderTools(row4b)}
              <Overflow>»</Overflow>
            </Seg>
            <Seg $w={33} $ml={4} $pl={0}><Grip /></Seg>
          </ToolRow>
          <CadCanvas />
          <BottomRow>
            <Seg $w={208} $pl={0}><Grip />{renderTools(bot1)}</Seg>
            <Seg $w={261} $pl={5.500}>{renderTools(bot2)}</Seg>
            <Seg $w={720} $pl={0}>
              <Grip />
              <Combo $w={57} $ml={3}>不偏移<ComboArrow><Caret /></ComboArrow></Combo>
              <Divider />
              <FieldLabel $gray>X=</FieldLabel>
              <Field>0<Spin><span>▲</span><span>▼</span></Spin></Field>
              <FieldLabel>mm</FieldLabel>
              <FieldLabel $gray>Y=</FieldLabel>
              <Field />
            </Seg>
          </BottomRow>
        </RightPane>
      </Workspace>

      <StatusBar>
        <StatusCell $w={148}>X=275382 Y=6851</StatusCell>
        <StatusCell $w={78}><Cjk>层高</Cjk>:2.15m</StatusCell>
        <StatusCell $w={98}><Cjk>底标高</Cjk>:-2.2m</StatusCell>
        <StatusCell $w={48}>0</StatusCell>
        <StatusCell $grow><Cjk>按鼠标左键选择筏板边线,按右键确定或</Cjk>ESC<Cjk>取消</Cjk><Fps>2 FPS</Fps></StatusCell>
      </StatusBar>

      <Taskbar>
        <StartCell><svg width="18" height="18" viewBox="0 0 18 18"><path d="M0 2.500l7.500-1v7H0zM8.500 1.300L18 0v8.500H8.500zM0 9.500h7.500v7l-7.500-1zM8.500 9.500H18V18l-9.500-1.300z" fill="#fff" /></svg></StartCell>
        <SearchBox>
          <SearchRing />
          在这里输入你要搜索的内容
          <SearchMic><svg width="14" height="20" viewBox="0 0 14 20"><rect x="4" y="1" width="6" height="11" rx="3" fill="none" stroke="#bbb" /><path d="M1.500 9a5.500 5.500 0 0 0 11 0M7 14.500V18M3.500 18.500h7" fill="none" stroke="#bbb" /></svg></SearchMic>
        </SearchBox>
        <TaskCell><svg width="20" height="18" viewBox="0 0 20 18"><path d="M5.500 1.500h9v15h-9zM2.500 4.500H.5v9h2M17.500 4.500h2v9h-2" fill="none" stroke="#eee" /></svg></TaskCell>
        <TaskCell><Pinwheel /></TaskCell>
        <TaskCell><FaInternetExplorer size={24} color="#e6e6e6" /></TaskCell>
        <TaskCell><Swirl /></TaskCell>
        <TaskCell><FaEdge size={24} color="#1e7fd8" /></TaskCell>
        <TaskCell><FaInternetExplorer size={25} color="#2d9cf0" /></TaskCell>
        <TaskCell><FolderArt /></TaskCell>
        <TaskCell $run><GArt /></TaskCell>
        <TaskCell $run><GreenE /></TaskCell>
        <TaskCell $run $active><AppArt /></TaskCell>
        <Tray>
          <TrayCell $w={40}>链接</TrayCell>
          <TrayCell $w={62} $ml={18}><span>15%</span><span>CPU使用</span></TrayCell>
          <TrayCell $w={22} $ml={7}><TrayGlyph viewBox="0 0 18 18"><path d="M3 12l6-6 6 6" fill="none" stroke="#eee" strokeWidth="1.400" /></TrayGlyph></TrayCell>
          <TrayCell $w={24}><TrayGlyph viewBox="0 0 18 18"><path d="M6 6h11v8H6z" fill="none" stroke="#eee" /><path d="M7 7.500h7v5H7zM1 6h4v4H1zM3 2v4" fill="#eee" stroke="#eee" /></TrayGlyph></TrayCell>
          <TrayCell $w={26}><TrayGlyph viewBox="0 0 18 18"><path d="M2 15a12 12 0 0 1 13-12M5 15a9 9 0 0 1 10-9M8 15a6 6 0 0 1 7-6M11 15a3 3 0 0 1 4-3" fill="none" stroke="#ccc" /></TrayGlyph></TrayCell>
          <TrayCell $w={20}><TrayGlyph viewBox="0 0 18 18"><path d="M2 7h3l4-4v12l-4-4H2z" fill="none" stroke="#eee" /><path d="M11 6c1 2 1 4 0 6M13.500 4c2 3 2 7 0 10" fill="none" stroke="#eee" /></TrayGlyph></TrayCell>
          <TrayCell $w={32}><svg width="24" height="15" viewBox="0 0 24 15"><rect x=".5" y=".5" width="23" height="14" fill="none" stroke="#eee" /><path d="M3 4h18M3 7h18M6 11h12" stroke="#eee" strokeDasharray="1.500 1" /></svg></TrayCell>
          <TrayCell $w={26}>中</TrayCell>
          <TrayCell $w={30}><SogouMark>S</SogouMark></TrayCell>
          <TrayCell $w={84}><span>7:08</span><span>2018/6/20</span></TrayCell>
          <TrayCell $w={26}><svg width="16" height="18" viewBox="0 0 16 18"><path d="M.7.700h14.600v12.600h-5l-2.300 3.500v-3.500H.7z" fill="none" stroke="#eee" /></svg></TrayCell>
        </Tray>
      </Taskbar>

      <Dialog>
        <DialogTitle>设置筏板边坡
          <DialogClose><svg width="11" height="11"><path d="M.5.5l10 10M10.500.5l-10 10" stroke="#222" /></svg></DialogClose>
        </DialogTitle>
        <ThumbGrid>
          <Thumb>
            <Slope box="23 98 665 415"
              d="M136 108V300M136 157H491V301H303M136 229H278L347 301M112 195L160 191L136 183M112 195L133 203M578 157V301M552 157H594M552 301H594M350 345V389M491 345V389M350 371H491M340 380L358 362M482 380L500 362M320 298a20 20 0 0 1 8-14"
              labels={[['800', 570, 270, 30, G, -90], ['mm', 570, 198, 24, W, -90], ['45', 227, 287, 30, G], ['度', 262, 288, 28, W], ['500', 376, 357, 30, G], ['mm', 437, 358, 22, W]]}
              cap={['边坡节点1', 262, 494, 48]} />
          </Thumb>
          <Thumb>
            <Slope box="701 98 665 415"
              d="M832 153V326M832 199H1048V241H1157V328H984M832 265H962L1025 328M810 235L854 232L832 224M810 235L832 243M1048 140V180M1157 140V180M1048 152H1157M1238 199V328M1213 199H1250M1213 241H1250M1213 328H1250M1027 372V410M1157 372V410M1027 394H1157"
              labels={[['500', 1060, 140, 30, G], ['mm', 1118, 136, 20, '#e8c890'], ['600', 1053, 383, 30, G], ['mm', 1105, 379, 20, '#e8c890'], ['300', 1196, 250, 30, G, -90], ['mm', 1196, 190, 20, W, -90], ['500', 1220, 332, 30, G, -90], ['mm', 1220, 276, 20, W, -90], ['45', 918, 318, 30, G], ['度', 955, 318, 26, W]]}
              cap={['边坡节点2', 948, 494, 44]} />
          </Thumb>
          <Thumb $sel>
            <Slope box="23 527 665 415"
              d="M127 576V824M127 625H431L506 703V778H127M103 697H155L128 688M103 697L127 708M431 582V625M506 585V625M431 601H506M562 625H602M570 706H602M583 625V706"
              labels={[['600', 410, 574, 30, G], ['mm', 477, 572, 24, W], ['450', 556, 722, 30, G, -90], ['mm', 552, 662, 24, W, -90]]}
              cap={['边坡节点3', 247, 921, 48]} />
          </Thumb>
          <Thumb>
            <Slope box="701 527 665 415"
              d="M811 537V782M811 589H1178V690L1107 736H811M788 658L835 654L813 647M788 658L811 668M1240 687H1275M1240 762H1275M1259 687V762M1105 792V835M1178 792V835M1105 808H1178"
              labels={[['200', 1234, 760, 30, G, -90], ['mm', 1230, 702, 24, W, -90], ['300', 1083, 781, 30, G], ['mm', 1148, 779, 24, W]]}
              cap={['边坡节点4', 918, 921, 48]} />
          </Thumb>
        </ThumbGrid>
        <Preview>
          <Slope box="18 14 1354 673" big thin frame="M233 33H1247V467H233Z"
            d="M316 87V503M316 172H818L944 294V422H316M273 286H358L318 267M273 286L316 305M818 100V172M944 100V172M818 130H944M806 142L830 120M932 142L956 120M1040 172H1110M1048 295H1110M1076 172V295M1065 162L1087 184M1065 285L1087 307"
            labels={[['600', 790, 83, 58, G], ['mm', 897, 80, 42, W], ['450', 1030, 330, 58, G, -90], ['mm', 1024, 226, 42, W, -90]]}
            cap={['边坡节点3', 515, 662, 86]} />
        </Preview>
        <DialogFoot>
          <DlgButton $primary>确定</DlgButton>
          <DlgButton>取消</DlgButton>
        </DialogFoot>
      </Dialog>

      <CalloutBox />
      <Ime>
        <ImeLogo>S</ImeLogo>
        <ImeBar>
          <span>中</span>
          <span>°,</span>
          <ImeGlyph viewBox="0 0 16 16"><circle cx="8" cy="8" r="6.500" fill="none" stroke="#0e6cae" strokeWidth="1.500" /><path d="M5 6v2M11 6v2M5 10.500c2 2 4 2 6 0" fill="none" stroke="#0e6cae" strokeWidth="1.300" /></ImeGlyph>
          <ImeGlyph viewBox="0 0 16 16"><rect x="5.500" y="1" width="5" height="9" rx="2.500" fill="#0e6cae" /><path d="M3 7a5 5 0 0 0 10 0M8 12v3" fill="none" stroke="#0e6cae" strokeWidth="1.300" /></ImeGlyph>
          <ImeGlyph viewBox="0 0 16 16"><rect x="1" y="3" width="14" height="10" rx="1" fill="#0e6cae" /><path d="M3 6h10M3 8.500h10M5 11h6" stroke="#fff" strokeDasharray="1 1" /></ImeGlyph>
          <ImeGlyph viewBox="0 0 16 16"><circle cx="6" cy="5" r="3" fill="#b8c4ce" /><path d="M1 14c0-6 10-6 10 0z" fill="#b8c4ce" /><rect x="9" y="9" width="6" height="5" fill="#c8d2da" /></ImeGlyph>
          <ImeGlyph viewBox="0 0 16 16"><path d="M5 2L1 5l2 3 2-1v7h6V7l2 1 2-3-4-3-3 1.500z" fill="#0e6cae" /></ImeGlyph>
          <ImeGlyph viewBox="0 0 16 16"><path d="M14 3a4 4 0 0 1-5 5L4 14a2 2 0 0 1-2-2l6-5a4 4 0 0 1 5-5l-2 3 1 1z" fill="#0e6cae" /></ImeGlyph>
        </ImeBar>
      </Ime>
    </Screen>
  );
}
